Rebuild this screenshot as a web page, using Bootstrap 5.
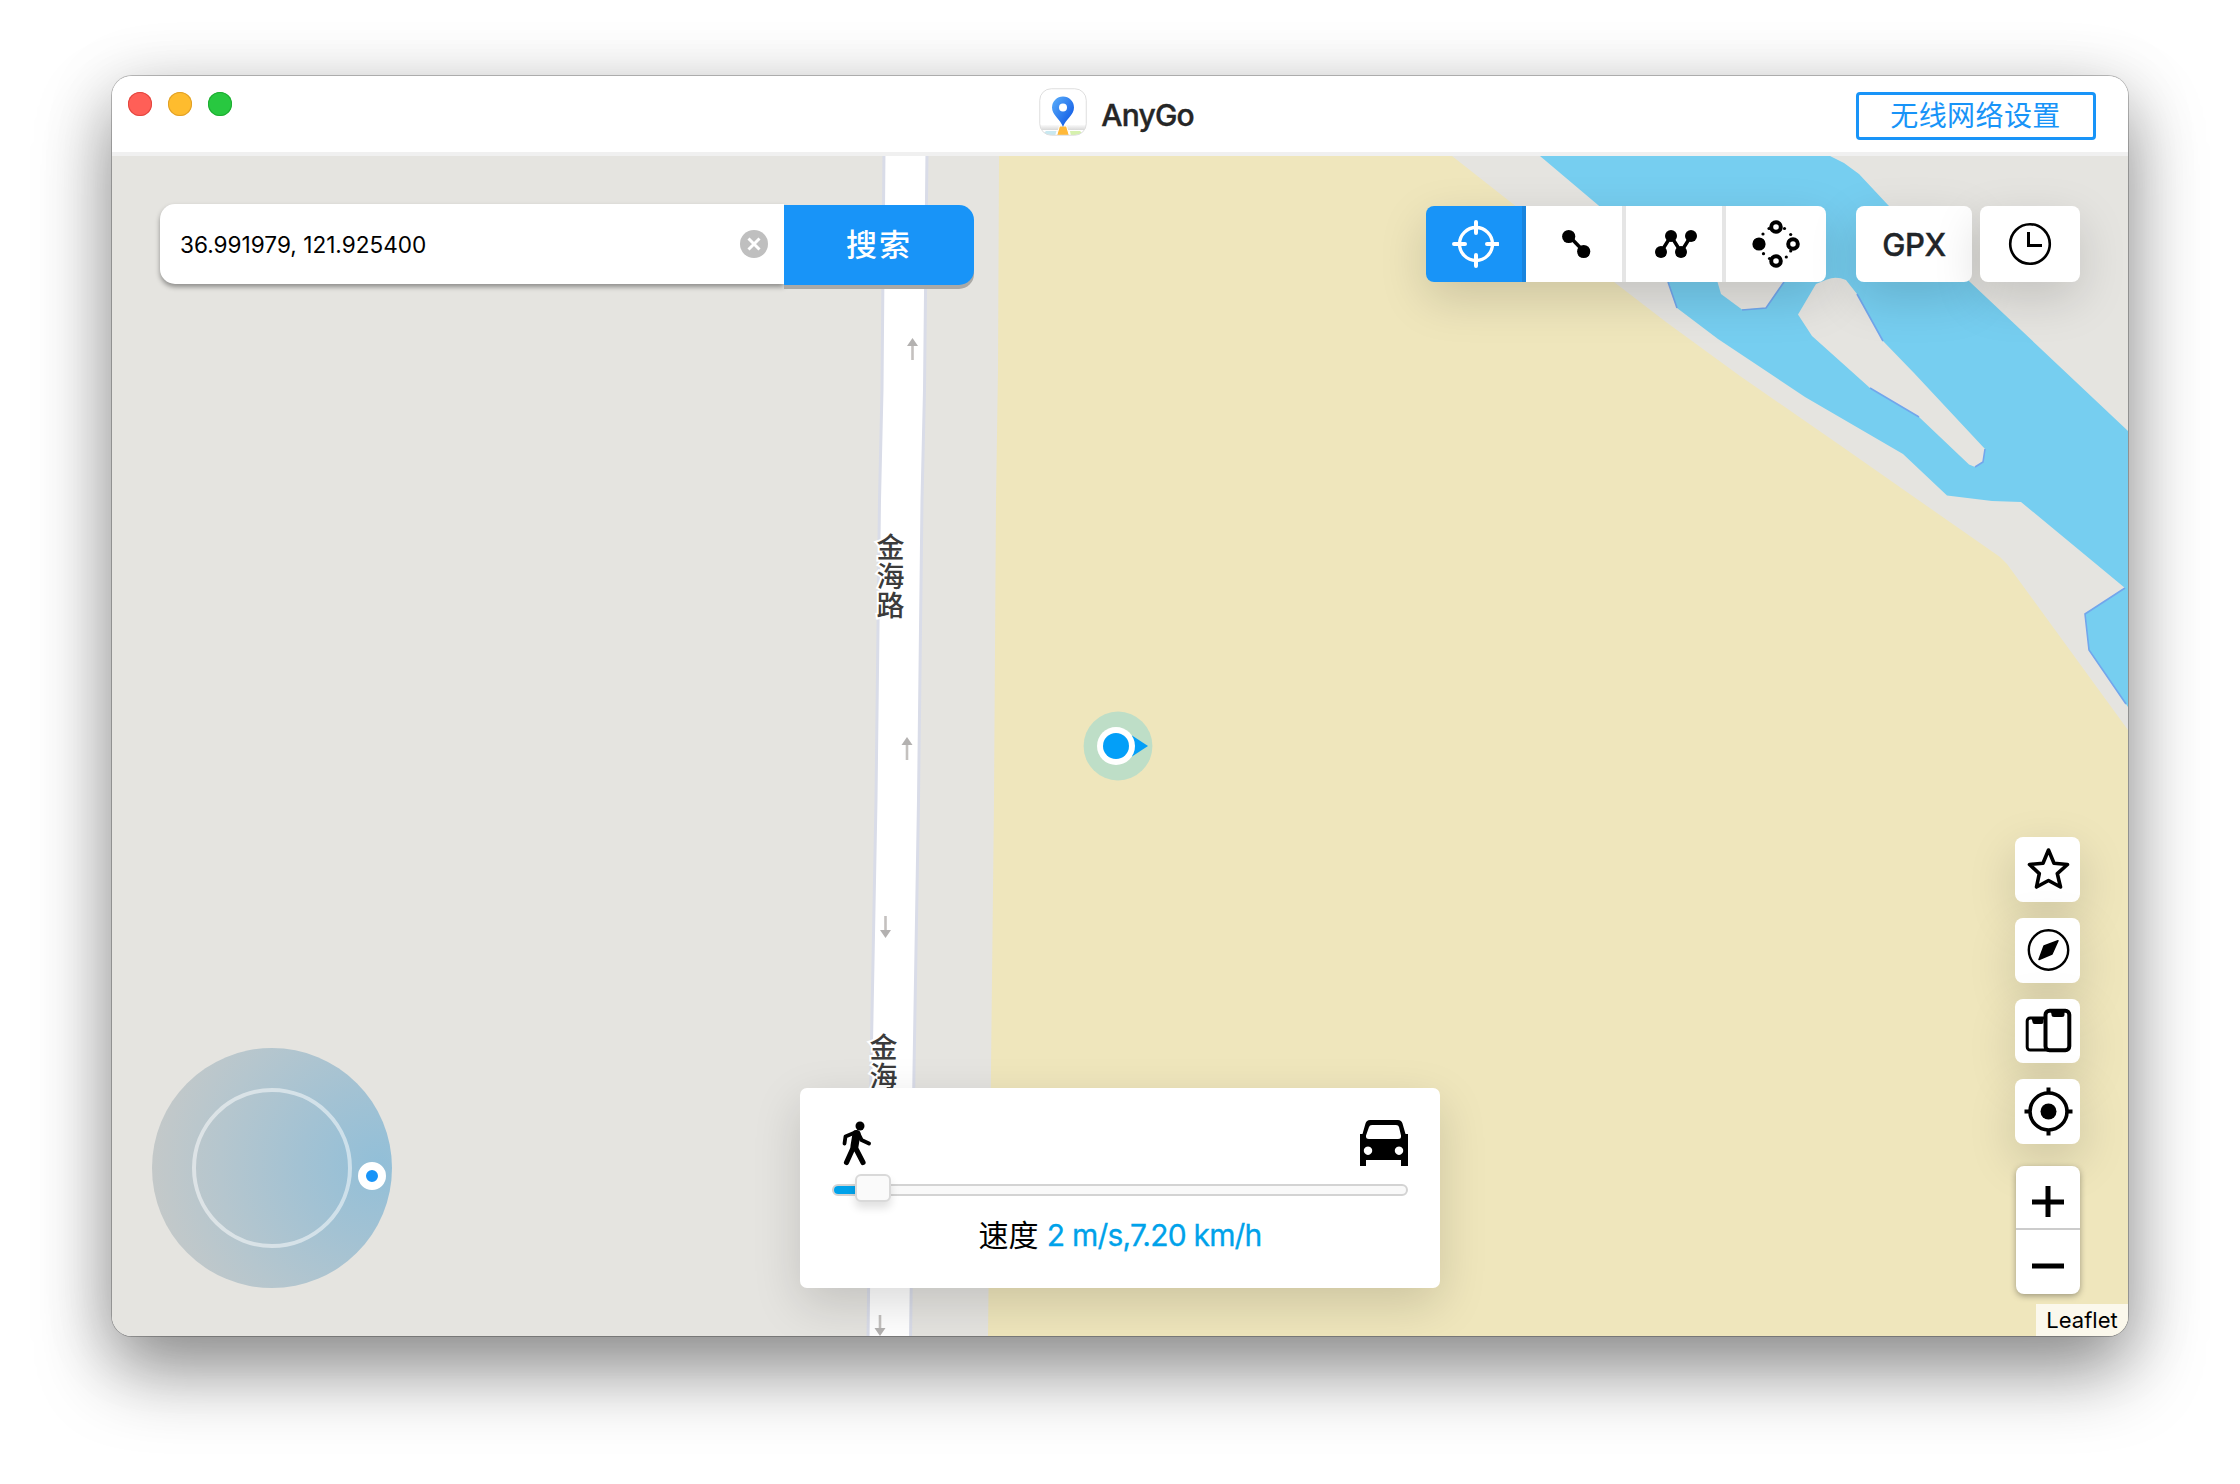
<!DOCTYPE html>
<html lang="zh-CN">
<head>
<meta charset="utf-8">
<meta name="viewport" content="width=device-width, initial-scale=1">
<title>AnyGo</title>
<link rel="stylesheet" href="https://cdn.jsdelivr.net/npm/bootstrap@5.3.0/dist/css/bootstrap.min.css">
<style>
  body { width: 2240px; height: 1484px; background: #fff; font-family: Inter, "Noto Sans CJK SC", sans-serif; color: #000; padding: 76px 112px 148px; overflow: hidden; }
  .app-window { width: 2016px; height: 1260px; border-radius: 20px; box-shadow: 0 0 0 1px rgba(0,0,0,.24), 0 36px 74px rgba(0,0,0,.39), 0 12px 70px rgba(0,0,0,.15); }
  .title-strip { height: 80px; border-bottom: 4px solid #f0f0f0; padding: 12px 32px 12px 16px; }
  .title-side { flex: 1 1 0; }
  .title-mid { margin-left: 9px; }
  .dots { gap: 16px; padding-top: 4px; }
  .dot { width: 24px; height: 24px; border-radius: 50%; }
  .dot-r { background: #ff5f57; box-shadow: inset 0 0 0 1px #e2463f; }
  .dot-y { background: #febc2e; box-shadow: inset 0 0 0 1px #e0a028; }
  .dot-g { background: #28c840; box-shadow: inset 0 0 0 1px #1eac31; }
  .app-name { font-size: 30px; font-weight: 500; line-height: 54px; margin-left: 14px; color: #262626; letter-spacing: -.8px; -webkit-text-stroke: .4px #262626; }
  .btn-wifi { width: 240px; height: 48px; border: 3px solid #1894f8; border-radius: 4px; color: #1894f8; font-size: 28px; line-height: 40px; letter-spacing: .4px; padding: 0 1px 0 0; }
  .map-area { height: 1180px; background: #e5e4e0; }
  .map-svg { position: absolute; inset: 0; }
  .road-name { writing-mode: vertical-rl; letter-spacing: 1px; font-size: 28px; font-weight: 500; }
  .controls { position: absolute; inset: 0; padding: 48px 48px 0; }
  .floaty { box-shadow: 0 16px 48px rgba(0,0,0,.15); }
  .search-field { width: 624px; height: 80px; border-radius: 15px 0 0 15px; padding: 0 16px 0 20px; box-shadow: 0 3px 5px rgba(0,0,0,.38); font-size: 22.600px; }
  .search-field span { padding-top: 2px; }
  .btn-search { width: 190px; height: 80px; margin-top: 1px; border: 0; border-radius: 0 15px 15px 0; background: #1894f8; color: #fff; font-size: 31px; font-weight: 500; letter-spacing: 2px; box-shadow: 0 4px 0 #aaa9a6; }
  .tool-group { height: 76px; border-radius: 8px; margin-top: 2px; }
  .tool { width: 100px; height: 76px; border-right: 4px solid #e5e5e5; background: #fff; padding: 0 0 0 4px; }
  .tool:first-child { background: #1894f8; border-right-color: #1884de; border-radius: 8px 0 0 8px; padding-left: 2px; }
  .tool:last-child { border-right: 0; border-radius: 0 8px 8px 0; padding-left: 0; }
  .tool-solo { height: 76px; border-radius: 8px; margin-top: 2px; background: #fff; }
  .gpx { width: 116px; font-size: 31px; font-weight: 500; color: #212529; margin-left: 30px; letter-spacing: -.5px; padding-top: 2px; -webkit-text-stroke: .4px #212529; }
  .clock { width: 100px; margin-left: 8px; }
  .side-col { position: absolute; right: 48px; top: 681px; gap: 16px; }
  .side-btn { width: 65px; height: 65px; border-radius: 8px; background: #fff; padding: 0 0 1px 0; }
  .side-btn-low { height: 64px; }
  .zoom-box { width: 64px; height: 128px; border-radius: 8px; margin-top: 6px; box-shadow: 0 2px 6px rgba(0,0,0,.34); }
  .zoom-in { height: 64px; border-bottom: 2px solid #ccc; }
  .zoom-out { height: 64px; }
  .attrib { position: absolute; right: 0; bottom: 0; width: 92px; height: 32px; background: rgba(255,255,255,.72); font-size: 22px; line-height: 33px; text-align: center; }
  .joystick { position: absolute; left: 40px; bottom: 48px; width: 240px; height: 240px; border-radius: 50%; background: radial-gradient(circle at 228px 116px, #92bfd8 0, #a3c2d3 80px, #b5c6ce 160px, #c6c9c8 240px); }
  .joy-ring { width: 160px; height: 160px; border-radius: 50%; border: 4px solid rgba(255,255,255,.5); }
  .joy-knob { position: absolute; left: 206px; top: 114px; width: 28px; height: 28px; border-radius: 50%; border: 8px solid #fff; background: #1894f8; }
  .speed-card { position: absolute; left: 688px; bottom: 48px; width: 640px; height: 200px; border-radius: 7px; padding: 32px; }
  .track { position: relative; height: 12px; border-radius: 6px; border: 2px solid #d3d3d3; background: #f9f9f9; margin-top: 18px; }
  .track-fill { height: 8px; border-radius: 4px 0 0 4px; background: #00a2ea; }
  .thumb { position: absolute; left: 21px; top: -12px; width: 36px; height: 28px; border-radius: 6px; border: 2px solid #d9d9d9; background: #fafafa; box-shadow: 0 6px 8px rgba(0,0,0,.12); }
  .speed-text { font-size: 30px; line-height: 40px; margin-top: 19px; }
  .speed-text span { color: #00a2ea; letter-spacing: -.8px; -webkit-text-stroke: .3px #00a2ea; }
</style>
<script src="https://cdn.jsdelivr.net/npm/bootstrap@5.3.0/dist/js/bootstrap.bundle.min.js"></script>
</head>
<body>
<div class="app-window d-flex flex-column overflow-hidden bg-white">
  <header class="title-strip d-flex align-items-start bg-white">
    <div class="title-side dots d-flex">
      <span class="dot dot-r"></span><span class="dot dot-y"></span><span class="dot dot-g"></span>
    </div>
    <div class="title-mid d-flex align-items-start">
      <svg width="48" height="48" viewBox="0 0 48 48">
        <defs>
          <linearGradient id="pin" x1="0" y1="0" x2="1" y2="1"><stop offset="0" stop-color="#5cb0fb"/><stop offset=".75" stop-color="#1b66e8"/></linearGradient>
          <linearGradient id="ground" x1="0" y1="0" x2="0" y2="1"><stop offset="0" stop-color="#fafafa"/><stop offset="1" stop-color="#d8d8d8"/></linearGradient>
          <clipPath id="iconclip"><rect x="1" y="1" width="46" height="46" rx="11"/></clipPath>
        </defs>
        <g clip-path="url(#iconclip)">
          <rect width="48" height="48" fill="#fff"/>
          <path d="M0 37h48v5H0z" fill="url(#ground)"/>
          <path d="M7 43h10.500L16 48H2z" fill="#c9e8f0"/>
          <path d="M31 43h10L46 48H32z" fill="#d6f1ae"/>
          <path d="M20.500 38h7L30.500 48h-13z" fill="#ffb93a" stroke="#fff" stroke-width="1"/>
        </g>
        <rect x=".75" y=".75" width="46.500" height="46.500" rx="11.500" fill="none" stroke="#dedede" stroke-width="1"/>
        <path d="M24 39C21.500 31.500 13 27 13 19.500a11 11 0 0 1 22 0C35 27 26.500 31.500 24 39z" fill="url(#pin)"/>
        <circle cx="24" cy="19.500" r="4" fill="#fff"/>
      </svg>
      <span class="app-name">AnyGo</span>
    </div>
    <div class="title-side d-flex justify-content-end pt-1">
      <button class="btn btn-wifi">无线网络设置</button>
    </div>
  </header>

  <main class="map-area position-relative overflow-hidden">
    <svg class="map-svg" width="2016" height="1180" viewBox="112 156 2016 1180">
      <path d="M999 156H1452L1513 204L1614 282L1666 322L1740 376L1844 448L1914 497L2000 557L2007 564L2128 730V1336H988L991 1070L994 800L996 500L998 370Z" fill="#efe6bc"/>
      <path d="M1540 156L1598 205L1650 250L1668 282L1677 308L1718 339L1805 397L1903 454L1947 495.500L1992 501L2021 502L2125 588L2085 614L2089 650L2128 707V431L1970 282L1888 205L1859 174L1844 163L1830 156Z" fill="#76cef0"/>
      <path d="M1717 265L1717.500 282L1721 294L1742 309.600L1766 308L1785 280L1780 240Z" fill="#e5e4e0"/>
      <path d="M1798 314.500L1816 284L1827 279.500Q1836 276 1846 280L1857 294L1883 341L1914 373L1985 449L1983 462L1975 467L1969 464.600L1919 417L1870 388L1812 336Z" fill="#e5e4e0"/>
      <g fill="none" stroke="#72a6ec" stroke-width="1.600">
        <path d="M1668 282L1677 308M1742 310L1766 308L1784 282M1857 294L1883 341M1870 388L1919 417M1985 449L1983 462L1975 467"/>
        <path d="M2125 588L2085 614L2089 650L2126 704"/>
      </g>
      <path d="M884 150H927L924.500 390L922 500L918.500 800L914 1070L910.500 1342H868L871 1070L876 800L879.500 500L882 390Z" fill="#fff" stroke="#d9dce8" stroke-width="3"/>
      <g stroke="#c4c1bf" stroke-width="2.600" fill="#b3b1b0">
        <path d="M912.500 360V344"/><path d="M912.500 338l5.500 8h-11z" stroke="none"/>
        <path d="M907 760V744"/><path d="M907 737l5.500 8h-11z" stroke="none"/>
        <path d="M885.500 916V932"/><path d="M885.500 938l5.500-8h-11z" stroke="none"/>
        <path d="M880 1315V1331"/><path d="M880 1336l5.500-8h-11z" stroke="none"/>
      </g>
      <g class="road-name" fill="#3b3b3b" stroke="#fff" stroke-width="4" paint-order="stroke">
        <text x="888.500" y="533">金海路</text>
        <text x="881.500" y="1033">金海</text>
      </g>
      <circle cx="1118" cy="746" r="34.400" fill="#a7dacd" fill-opacity=".68"/>
      <path d="M1132 735.500L1148 746L1132 756.500Z" fill="#039ff8"/>
      <circle cx="1116" cy="746" r="19" fill="#fff"/>
      <circle cx="1116" cy="746" r="13" fill="#039ff8"/>
    </svg>

    <div class="controls d-flex align-items-start">
      <div class="search-field d-flex align-items-center justify-content-between bg-white">
        <span>36.991979, 121.925400</span>
        <svg width="28" height="28" viewBox="0 0 28 28"><circle cx="14" cy="14" r="14" fill="#bfbfbf"/><path d="M8.500 8.500l11 11M19.500 8.500l-11 11" stroke="#fff" stroke-width="3"/></svg>
      </div>
      <button class="btn-search">搜索</button>

      <div class="tool-group floaty d-flex ms-auto">
        <div class="tool d-flex align-items-center justify-content-center"><svg width="48" height="48" viewBox="0 0 48 48" fill="none" stroke="#fff" stroke-width="4" stroke-linecap="round"><circle cx="25" cy="24" r="16.500" stroke-width="3.400"/><path d="M25 2v11M25 35v11M3 24h11M36 24h11"/></svg></div>
        <div class="tool d-flex align-items-center justify-content-center"><svg width="48" height="48" viewBox="0 0 48 48"><path d="M17 16l15 15.500" stroke="#000" stroke-width="3.500"/><circle cx="16.700" cy="16.500" r="6.600"/><circle cx="31.700" cy="31.500" r="6.600"/></svg></div>
        <div class="tool d-flex align-items-center justify-content-center"><svg width="48" height="48" viewBox="0 0 48 48"><path d="M9 32L19 16L29 32L39 16" fill="none" stroke="#000" stroke-width="3.500"/><circle cx="9" cy="32" r="6"/><circle cx="19" cy="16" r="6"/><circle cx="29" cy="32" r="6"/><circle cx="39" cy="16" r="6"/></svg></div>
        <div class="tool d-flex align-items-center justify-content-center"><svg width="50" height="50" viewBox="0 0 50 50"><g><circle cx="12" cy="15" r="1.600"/><circle cx="18" cy="9.500" r="1.600"/><circle cx="33.500" cy="9.500" r="1.600"/><circle cx="39.700" cy="15.500" r="1.600"/><circle cx="12.500" cy="34.700" r="1.600"/><circle cx="18.500" cy="39.500" r="1.600"/><circle cx="35.300" cy="38" r="1.600"/><circle cx="39.700" cy="32" r="1.600"/></g><circle cx="8" cy="25" r="6.600"/><g fill="#fff" stroke="#000" stroke-width="4"><circle cx="25" cy="8" r="4.800"/><circle cx="42" cy="25" r="4.800"/><circle cx="25" cy="42" r="4.800"/></g></svg></div>
      </div>
      <div class="tool-solo floaty gpx d-flex align-items-center justify-content-center">GPX</div>
      <div class="tool-solo floaty clock d-flex align-items-center justify-content-center"><svg width="44" height="44" viewBox="0 0 44 44" fill="none" stroke="#000"><circle cx="22" cy="22" r="19.800" stroke-width="2.600"/><path d="M20.500 10v13.500H34" stroke-width="3"/></svg></div>
    </div>

    <div class="side-col d-flex flex-column align-items-end">
      <div class="side-btn floaty d-flex align-items-center justify-content-center"><svg width="48" height="48" viewBox="0 0 48 48"><path d="M24.500 5L30 18.200L43.500 19.500L33.300 28.600L36.500 42L24.500 35.500L12.500 42L15.300 28.600L5.500 19.500L19 18.200Z" fill="none" stroke="#000" stroke-width="3.600" stroke-linejoin="round"/></svg></div>
      <div class="side-btn floaty d-flex align-items-center justify-content-center"><svg width="48" height="48" viewBox="0 0 48 48"><circle cx="24.500" cy="24" r="19.700" fill="none" stroke="#000" stroke-width="2.400"/><path d="M34 14.800L20 20L15 33.500L28 28Z" stroke="#000" stroke-width="1.500" stroke-linejoin="round"/></svg></div>
      <div class="side-btn side-btn-low floaty d-flex align-items-center justify-content-center"><svg width="48" height="48" viewBox="0 0 48 48"><rect x="3.200" y="11" width="24" height="32" rx="3" fill="#fff" stroke="#000" stroke-width="3"/><path d="M7.500 11h12v4q0 2-2 2h-7q-2 0-2-2z"/><rect x="21.500" y="3.700" width="23.800" height="39.500" rx="4" fill="#fff" stroke="#000" stroke-width="4"/><path d="M26.500 3h14v4.500q0 2.500-2.500 2.500h-8q-2.500 0-2.500-2.500z"/></svg></div>
      <div class="side-btn floaty d-flex align-items-center justify-content-center"><svg width="50" height="50" viewBox="0 0 50 50"><circle cx="25.500" cy="25.500" r="18.500" fill="none" stroke="#000" stroke-width="3.600"/><circle cx="25.500" cy="25.500" r="8"/><path d="M25.500 1.500v6M25.500 43.500v6M1.500 25.500h6M43.500 25.500h6" stroke="#000" stroke-width="4"/></svg></div>
      <div class="zoom-box bg-white overflow-hidden">
        <div class="zoom-in d-flex align-items-center justify-content-center"><svg width="34" height="40" viewBox="0 0 34 40"><path d="M17 9v32M1 25h32" stroke="#000" stroke-width="5"/></svg></div>
        <div class="zoom-out d-flex align-items-center justify-content-center"><svg width="34" height="34" viewBox="0 0 34 34"><path d="M1 21h32" stroke="#000" stroke-width="5"/></svg></div>
      </div>
    </div>

    <div class="joystick d-flex align-items-center justify-content-center">
      <div class="joy-ring"></div>
      <div class="joy-knob"></div>
    </div>

    <section class="speed-card floaty bg-white">
      <div class="d-flex justify-content-between">
        <svg width="46" height="46" viewBox="0 0 46 46" fill="none" stroke="#000" stroke-linecap="round" stroke-linejoin="round"><circle cx="28" cy="6" r="4.500" fill="#000" stroke="none"/><path d="M24.500 14L22.500 26" stroke-width="8"/><path d="M23 12.500L13.500 16.500L12.500 23.500" stroke-width="3.800"/><path d="M26.500 14L29.500 20L37 23.500" stroke-width="4"/><path d="M21.500 27L14.500 42.500M23 27L31 42.500" stroke-width="5.200"/></svg>
        <svg width="48" height="46" viewBox="0 0 48 46"><path fill-rule="evenodd" d="M10 0h28q3.500 0 4.500 3.500L45.500 14H48v32h-7v-6H6v6H0V14h2.500L5.500 3.500Q6.500 0 10 0zM12 5q-2.500 0-3 2L6 15.500q-.5 3.500 3 3.500h29q3.500 0 3-3.500L39 7q-.5-2-3-2zM8 26.500a4.200 4.200 0 1 0 .01 0zM39 26.500a4.200 4.200 0 1 0 .01 0z"/></svg>
      </div>
      <div class="track"><div class="track-fill" style="width:5%"></div><div class="thumb"></div></div>
      <div class="speed-text text-center">速度 <span>2 m/s,7.20 km/h</span></div>
    </section>

    <div class="attrib">Leaflet</div>
  </main>
</div>
</body>
</html>
